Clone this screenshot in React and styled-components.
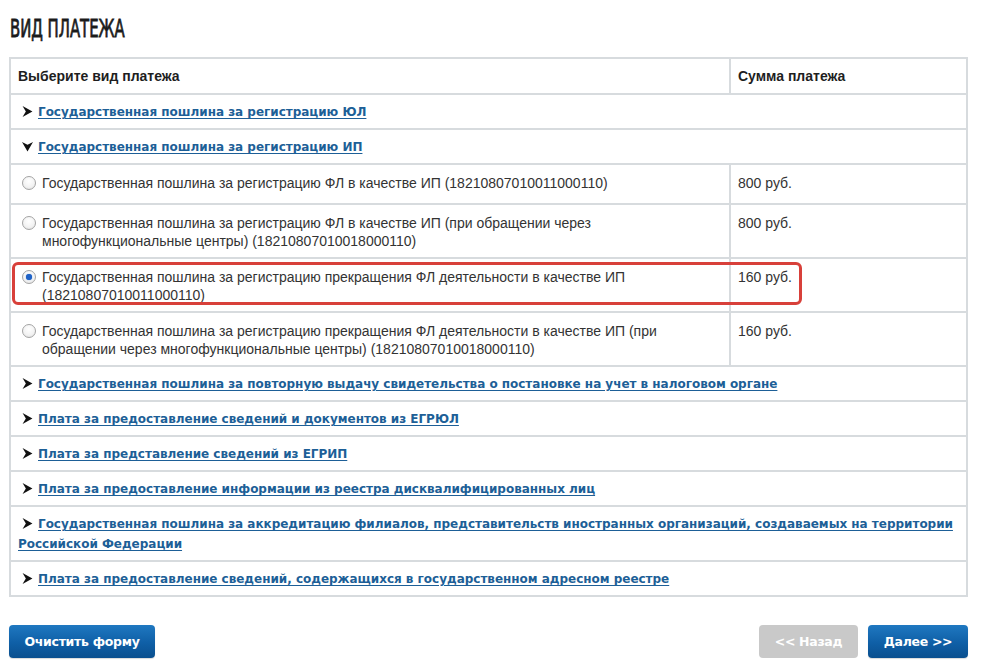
import React from "react";
import styled, { createGlobalStyle } from "styled-components";

const Global = createGlobalStyle`
  html, body { margin: 0; padding: 0; background: #fff; }
  body { font-family: "Liberation Sans", Arial, sans-serif; color: #333; }
`;

const Page = styled.div`
  width: 982px;
  height: 665px;
  padding: 15px 14px 0 9px;
  box-sizing: border-box;
  overflow: hidden;
`;

const Title = styled.h1`
  margin: 0 0 14px 1px;
  font-family: "DejaVu Sans Condensed", "DejaVu Sans", sans-serif;
  font-weight: 400;
  font-size: 25px;
  line-height: 28px;
  color: #1b1b1b;
  -webkit-text-stroke: 0.8px #1b1b1b;
  transform: scaleX(0.66);
  transform-origin: left center;
  white-space: nowrap;
`;

const TableWrap = styled.div`
  position: relative;
`;

const Table = styled.table`
  width: 959px;
  border-collapse: collapse;
  border: 2px solid #d7dbde;
  font-size: 13px;
`;

const Th = styled.th`
  text-align: left;
  font-weight: bold;
  font-size: 14px;
  color: #1e1e1e;
  padding: 9px 7px 8px;
  line-height: 17px;
  border: 2px solid #d7dbde;
  width: ${(p) => p.$w || "auto"};
`;

const Td = styled.td`
  border: 2px solid #d7dbde;
  vertical-align: top;
  padding: ${(p) => (p.$link ? "7px 7px 6px" : "9px 7px 7px")};
  line-height: ${(p) => (p.$link ? "20px" : "18px")};
  color: #333;
`;

const Group = styled.a`
  font-family: "DejaVu Sans", Tahoma, sans-serif;
  font-weight: bold;
  font-size: 12px;
  color: #1d5f97;
  text-decoration: underline;
  text-underline-offset: 2px;
  letter-spacing: -0.02px;
`;

const Arrow = styled.svg`
  display: inline-block;
  width: 11px;
  height: 11px;
  margin: 0 5px 0 4px;
  vertical-align: -1px;
`;

const Option = styled.label`
  display: flex;
  align-items: flex-start;
  gap: 6px;
  min-height: 22px;
  padding-left: 4px;
  color: #333;
  font-size: 14px;
`;

const Radio = styled.span`
  flex: none;
  width: 14px;
  height: 14px;
  margin-top: 2px;
  border-radius: 50%;
  border: 1px solid #a4a4a4;
  box-sizing: border-box;
  background: radial-gradient(circle at 50% 35%, #fff 0%, #f2f2f2 60%, #d8d8d8 100%);
  display: flex;
  align-items: center;
  justify-content: center;
  &::after {
    content: "";
    width: 6px;
    height: 6px;
    border-radius: 50%;
    background: ${(p) => (p.$checked ? "#1f62c6" : "transparent")};
    box-shadow: ${(p) => (p.$checked ? "0 0 1px #1f62c6" : "none")};
  }
`;

const Price = styled.span`
  font-size: 14px;
  color: #333;
`;

const Highlight = styled.div`
  position: absolute;
  left: 3px;
  top: 205px;
  width: 784px;
  height: 37px;
  border: 3px solid #d8403a;
  border-radius: 6px;
  pointer-events: none;
`;

const Footer = styled.div`
  display: flex;
  justify-content: space-between;
  align-items: center;
  margin-top: 28px;
  width: 959px;
`;

const Btns = styled.div`
  display: flex;
  gap: 10px;
`;

const Button = styled.button`
  height: 33px;
  width: ${(p) => p.$w}px;
  padding: 0;
  border: none;
  border-radius: 4px;
  font-family: "DejaVu Sans", Tahoma, sans-serif;
  font-weight: bold;
  font-size: 12.5px;
  color: #fff;
  letter-spacing: -0.3px;
  background: ${(p) =>
    p.$disabled
      ? "#c9c9c9"
      : "linear-gradient(to bottom, #1f78c1 0%, #0f5fa6 55%, #0a4f8e 100%)"};
  box-shadow: ${(p) => (p.$disabled ? "none" : "0 1px 1px rgba(0,0,0,0.15)")};
`;

const ArrowIcon = ({ down }) => (
  <Arrow viewBox="0 0 10 10">
    {down ? (
      <path d="M0 1 L5 3.5 L10 1 L5 9.5 Z" fill="#111" />
    ) : (
      <path d="M0.5 0 L9.5 5 L0.5 10 L3.5 5 Z" fill="#111" />
    )}
  </Arrow>
);

const GroupRow = ({ text, open }) => (
  <tr>
    <Td $link colSpan={2}>
      <ArrowIcon down={open} />
      <Group href="#">{text}</Group>
    </Td>
  </tr>
);

const OptionRow = ({ text, price, checked }) => (
  <tr>
    <Td>
      <Option>
        <Radio $checked={checked} />
        <span>{text}</span>
      </Option>
    </Td>
    <Td>
      <Price>{price}</Price>
    </Td>
  </tr>
);

export default function App() {
  return (
    <Page>
      <Global />
      <Title>ВИД ПЛАТЕЖА</Title>
      <TableWrap>
        <Table>
          <thead>
            <tr>
              <Th $w="704px">Выберите вид платежа</Th>
              <Th>Сумма платежа</Th>
            </tr>
          </thead>
          <tbody>
            <GroupRow text="Государственная пошлина за регистрацию ЮЛ" />
            <GroupRow open text="Государственная пошлина за регистрацию ИП" />
            <OptionRow
              text="Государственная пошлина за регистрацию ФЛ в качестве ИП (18210807010011000110)"
              price="800 руб."
            />
            <OptionRow
              text="Государственная пошлина за регистрацию ФЛ в качестве ИП (при обращении через многофункциональные центры) (18210807010018000110)"
              price="800 руб."
            />
            <OptionRow
              checked
              text="Государственная пошлина за регистрацию прекращения ФЛ деятельности в качестве ИП (18210807010011000110)"
              price="160 руб."
            />
            <OptionRow
              text="Государственная пошлина за регистрацию прекращения ФЛ деятельности в качестве ИП (при обращении через многофункциональные центры) (18210807010018000110)"
              price="160 руб."
            />
            <GroupRow text="Государственная пошлина за повторную выдачу свидетельства о постановке на учет в налоговом органе" />
            <GroupRow text="Плата за предоставление сведений и документов из ЕГРЮЛ" />
            <GroupRow text="Плата за представление сведений из ЕГРИП" />
            <GroupRow text="Плата за предоставление информации из реестра дисквалифицированных лиц" />
            <GroupRow text="Государственная пошлина за аккредитацию филиалов, представительств иностранных организаций, создаваемых на территории Российской Федерации" />
            <GroupRow text="Плата за предоставление сведений, содержащихся в государственном адресном реестре" />
          </tbody>
        </Table>
        <Highlight />
      </TableWrap>
      <Footer>
        <Button $w={146}>Очистить форму</Button>
        <Btns>
          <Button $disabled $w={99}>&lt;&lt; Назад</Button>
          <Button $w={100}>Далее &gt;&gt;</Button>
        </Btns>
      </Footer>
    </Page>
  );
}
